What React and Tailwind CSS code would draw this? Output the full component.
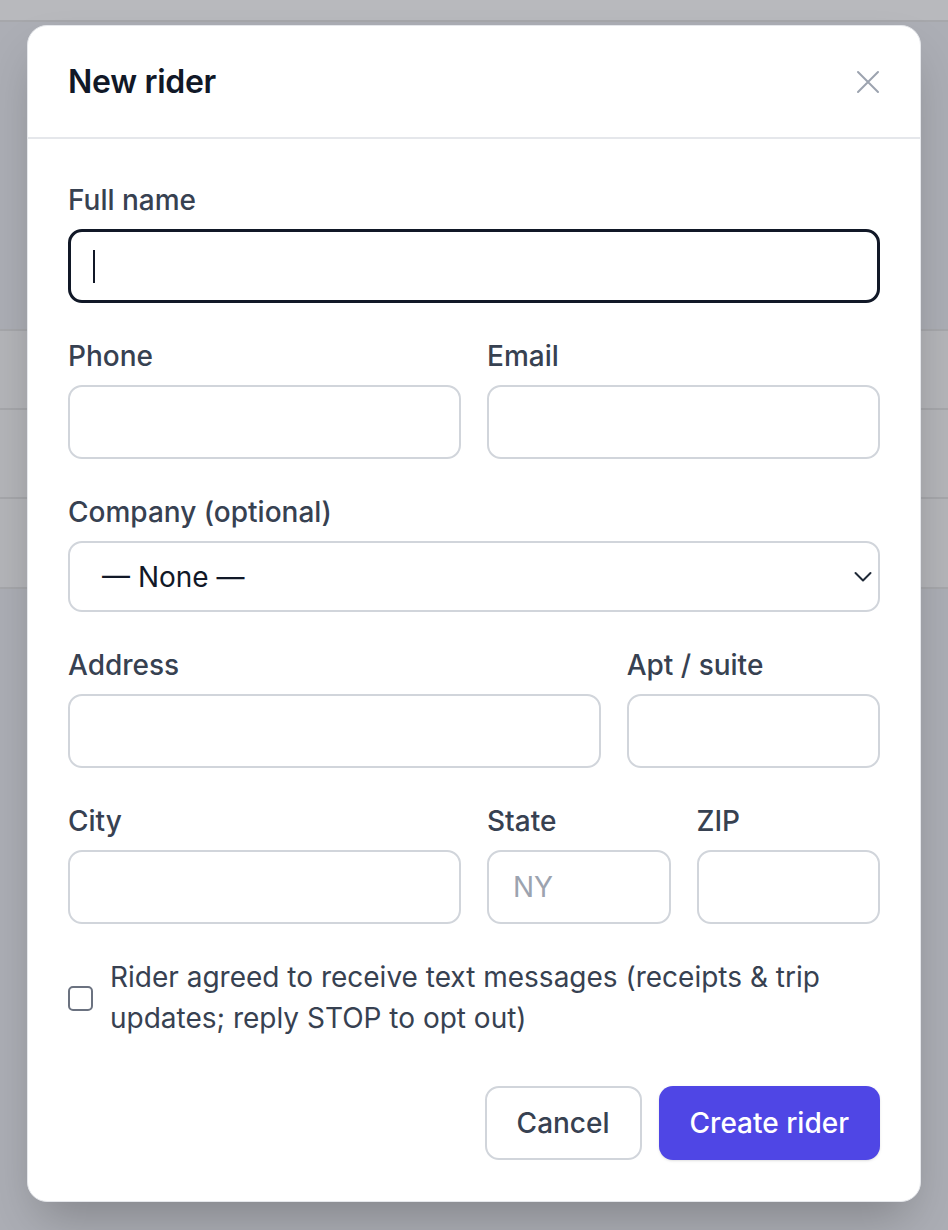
import React from "react";

const font = { fontFamily: "Inter, 'Noto Sans', sans-serif" };

function Label({ children }) {
  return (
    <label className="block text-[28px] leading-[40px] font-medium text-[#374151] mb-[9px]">
      {children}
    </label>
  );
}

function Field({ label, placeholder, className = "" }) {
  return (
    <div className={className}>
      <Label>{label}</Label>
      <input
        type="text"
        placeholder={placeholder}
        className="block w-full h-[74px] rounded-[14px] border-2 border-[#d1d5db] bg-white px-[24px] text-[28px] text-[#111827] placeholder:text-[#9ca3af] outline-none"
      />
    </div>
  );
}

export default function App() {
  return (
    <div className="relative w-[948px] h-[1230px] overflow-hidden bg-[#acaeb5]" style={font}>
      {/* page behind the overlay */}
      <div className="h-[22px] bg-[#b8b9bd] border-b-2 border-[#a6a7ab]" />
      <div className="h-[309px] bg-[#acaeb5] border-b-2 border-[#a6a7ab]" />
      <div className="h-[79px] bg-[#b4b5b9] border-b-2 border-[#a6a7ab]" />
      <div className="h-[89px] bg-[#b4b5b9] border-b-2 border-[#a6a7ab]" />
      <div className="h-[90px] bg-[#b4b5b9] border-b-2 border-[#a6a7ab]" />

      {/* modal */}
      <div className="absolute left-[27px] top-[25px] w-[894px] rounded-[20px] border border-[#e5e7eb] bg-white shadow-2xl">
        <div className="h-[113px] px-[40px] flex items-center justify-between border-b-2 border-[#e5e7eb]">
          <h2 className="text-[32px] font-semibold text-[#111827] tracking-[-0.3px]">New rider</h2>
          <button className="w-[24px] h-[24px] flex items-center justify-center">
            <svg width="24" height="24" viewBox="0 0 24 24" fill="none" stroke="#9ca3af" strokeWidth="2" strokeLinecap="round">
              <path d="M2 2L22 22M22 2L2 22" />
            </svg>
          </button>
        </div>

        <div className="px-[40px] pt-[41px] pb-[41px] flex flex-col gap-[33px]">
          <div>
            <Label>Full name</Label>
            <div className="h-[74px] rounded-[14px] border-[3px] border-[#111827] flex items-center pl-[22px]">
              <span className="w-[2px] h-[33px] bg-[#111827]" />
            </div>
          </div>

          <div className="grid grid-cols-2 gap-x-[26px]">
            <Field label="Phone" />
            <Field label="Email" />
          </div>

          <div>
            <Label>Company (optional)</Label>
            <div className="h-[71px] rounded-[14px] border-2 border-[#d1d5db] flex items-center justify-between pl-[32px] pr-[6px]">
              <span className="text-[28px] text-[#111827]">— None —</span>
              <svg width="18" height="12" viewBox="0 0 18 12" fill="none" stroke="#1f2937" strokeWidth="2" strokeLinecap="round" strokeLinejoin="round">
                <path d="M1.5 2L9 9.5L16.5 2" />
              </svg>
            </div>
          </div>

          <div className="grid grid-cols-[532fr_253fr] gap-x-[26px]">
            <Field label="Address" />
            <Field label="Apt / suite" />
          </div>

          <div className="grid grid-cols-4 gap-x-[26px]">
            <Field label="City" className="col-span-2" />
            <Field label="State" placeholder="NY" />
            <Field label="ZIP" />
          </div>

          <label className="flex items-center gap-[17px]">
            <span className="shrink-0 w-[25px] h-[25px] rounded-[5px] border-2 border-[#6b7280] bg-white" />
            <span className="text-[28px] leading-[41px] text-[#374151]">
              Rider agreed to receive text messages (receipts &amp; trip updates; reply STOP to opt out)
            </span>
          </label>

          <div className="mt-[14px] flex justify-end gap-[17px]">
            <button className="h-[74px] px-[30px] rounded-[14px] border-2 border-[#d1d5db] bg-white text-[28px] font-medium text-[#374151]">
              Cancel
            </button>
            <button className="h-[74px] px-[31px] rounded-[14px] bg-[#4f46e5] text-[28px] font-medium text-white shadow-sm">
              Create rider
            </button>
          </div>
        </div>
      </div>
    </div>
  );
}
